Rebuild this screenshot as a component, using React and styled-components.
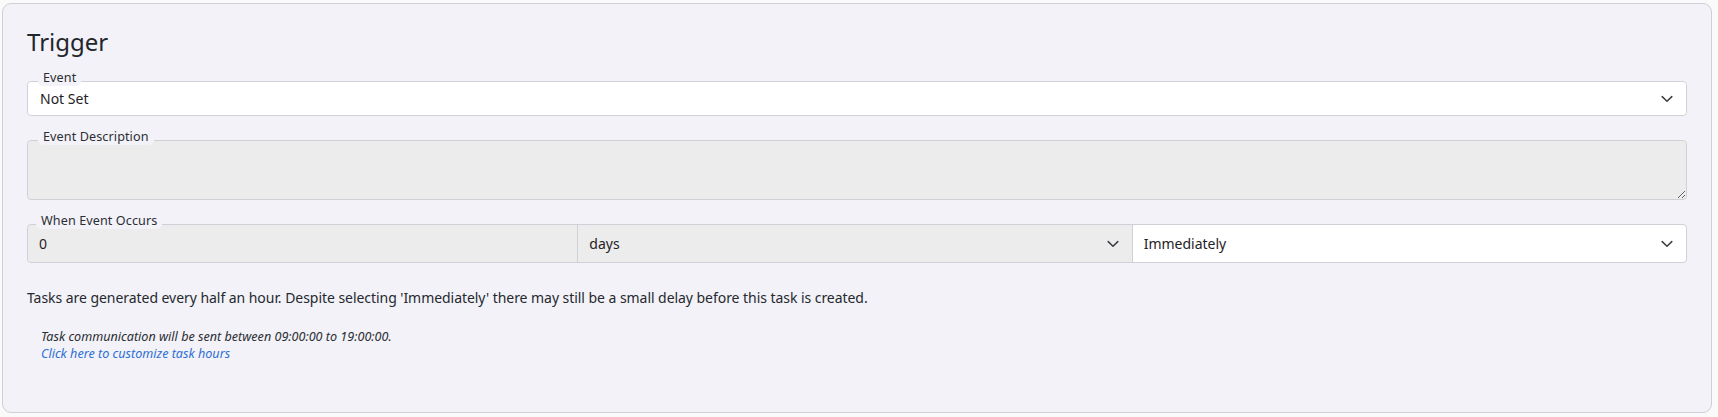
import React from "react";
import styled, { createGlobalStyle } from "styled-components";

const Global = createGlobalStyle`
  html, body { margin: 0; padding: 0; background: #fafafb; }
  body { font-family: "Noto Sans", "Open Sans", sans-serif; color: #222529; }
  * { box-sizing: border-box; }
`;

const Page = styled.div`
  padding: 3px 6px 4px 2px;
`;

const Card = styled.section`
  background: #f2f2f8;
  border: 1px solid #cfcfd6;
  border-radius: 9px;
  padding: 22px 24px 50px 24px;
  display: flex;
  flex-direction: column;
`;

const Title = styled.h2`
  margin: 0;
  font-size: 24px;
  line-height: 32px;
  font-weight: 400;
  color: #23262b;
`;

const Field = styled.div`
  position: relative;
  margin-top: ${(p) => p.$mt || 24}px;
  border: 1px solid #cfd1d7;
  border-radius: 4px;
  background: ${(p) => (p.$disabled ? "#ececec" : "#ffffff")};
  height: ${(p) => p.$h}px;
  display: flex;
`;

const Legend = styled.span`
  position: absolute;
  left: ${(p) => p.$left || 10}px;
  top: -12px;
  padding: 0 5px;
  font-size: 12.6px;
  line-height: 16px;
  letter-spacing: 0.1px;
  color: #2b2e33;
  background: #f2f2f8;
  border-radius: 5px;
  z-index: 1;
  white-space: nowrap;
`;

const SelectBox = styled.div`
  min-width: 0;
  flex: 1;
  display: flex;
  align-items: center;
  justify-content: space-between;
  padding: 0 13px 0 ${(p) => p.$pl || 12}px;
  font-size: 14px;
  color: #1f2226;
  background: ${(p) => (p.$disabled ? "#ececec" : "#ffffff")};
  border-left: ${(p) => (p.$divider ? "1px solid #cfd1d7" : "none")};
  border-radius: ${(p) => p.$radius || "4px"};
`;

const TextArea = styled.textarea`
  flex: 1;
  border: none;
  background: #ececec;
  border-radius: 4px;
  resize: vertical;
  font-family: inherit;
  font-size: 14px;
  outline: none;
  padding: 8px 12px;
`;

const Row = styled.div`
  display: grid;
  grid-template-columns: calc((100% - 10px) / 3) 1fr 1fr;
  flex: 1;
`;

const Info = styled.p`
  margin: 25px 0 0;
  font-size: 14px;
  line-height: 20px;
  letter-spacing: -0.05px;
  color: #26292e;
`;

const Note = styled.div`
  margin-top: 20px;
  padding-left: 14px;
  font-size: 12.6px;
  line-height: 17px;
  font-style: italic;
  color: #2b2e33;
  display: flex;
  flex-direction: column;
  align-items: flex-start;
`;

const Link = styled.a`
  color: #2f6fd6;
  text-decoration: none;
  cursor: pointer;
`;

const Chevron = () => (
  <svg width="12" height="8" viewBox="0 0 12 8" fill="none">
    <path d="M1.2 1.6 L6 6.2 L10.8 1.6" stroke="#3a3d42" strokeWidth="1.5" strokeLinecap="round" strokeLinejoin="round" />
  </svg>
);

export default function App() {
  return (
    <>
      <Global />
      <Page>
        <Card>
          <Title>Trigger</Title>

          <Field $mt={23} $h={35}>
            <Legend>Event</Legend>
            <SelectBox>
              <span>Not Set</span>
              <Chevron />
            </SelectBox>
          </Field>

          <Field $h={60} $disabled>
            <Legend>Event Description</Legend>
            <TextArea readOnly defaultValue="" />
          </Field>

          <Field $h={39} $disabled>
            <Legend $left={8}>When Event Occurs</Legend>
            <Row>
              <SelectBox $disabled $radius="4px 0 0 4px" $pl={11}>
                <span>0</span>
              </SelectBox>
              <SelectBox $disabled $divider $radius="0" $pl={11}>
                <span>days</span>
                <Chevron />
              </SelectBox>
              <SelectBox $divider $radius="0 4px 4px 0" $pl={11}>
                <span>Immediately</span>
                <Chevron />
              </SelectBox>
            </Row>
          </Field>

          <Info>
            Tasks are generated every half an hour. Despite selecting 'Immediately' there may still be a small delay before this task is created.
          </Info>

          <Note>
            <span>Task communication will be sent between 09:00:00 to 19:00:00.</span>
            <Link>Click here to customize task hours</Link>
          </Note>
        </Card>
      </Page>
    </>
  );
}
